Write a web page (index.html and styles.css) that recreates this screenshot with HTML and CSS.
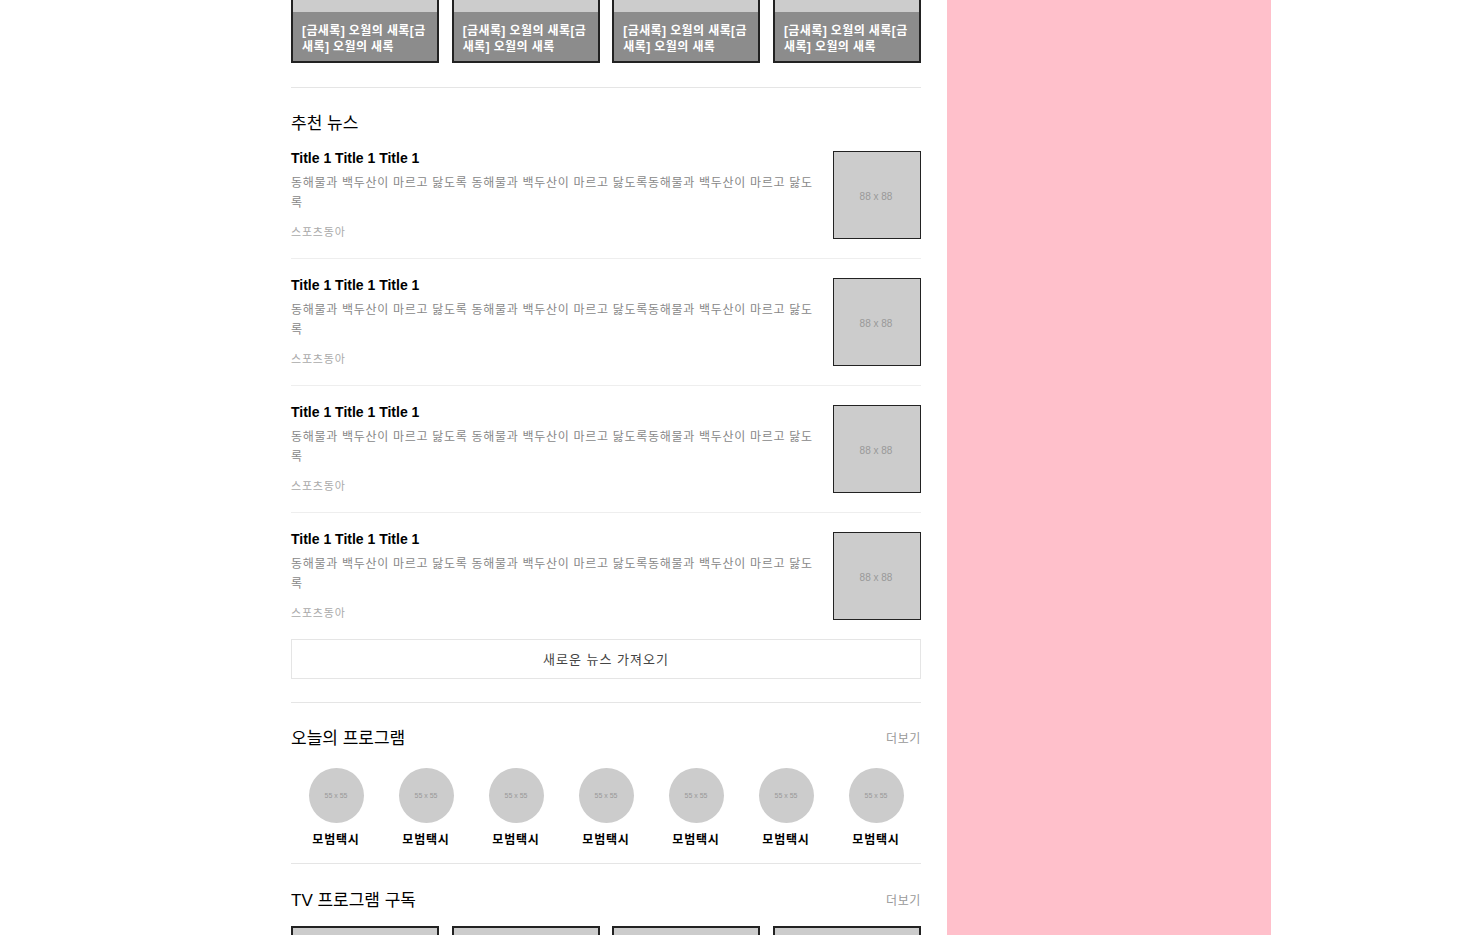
FILE: index.html
```html
<!DOCTYPE html>
<html lang="ko">
<head>
<meta charset="utf-8">
<title>뉴스</title>
<link rel="stylesheet" href="styles.css">
</head>
<body>
<div class="page">
  <main class="main">
    <section class="top-cards">
      <div class="card"><div class="card-img"></div><div class="card-cap">[금새록] 오월의 새록[금새록] 오월의 새록</div></div>
      <div class="card"><div class="card-img"></div><div class="card-cap">[금새록] 오월의 새록[금새록] 오월의 새록</div></div>
      <div class="card"><div class="card-img"></div><div class="card-cap">[금새록] 오월의 새록[금새록] 오월의 새록</div></div>
      <div class="card"><div class="card-img"></div><div class="card-cap">[금새록] 오월의 새록[금새록] 오월의 새록</div></div>
    </section>

    <section class="sec news">
      <h2 class="sec-title">추천 뉴스</h2>
      <ul class="news-list">
        <li class="news-item">
          <div class="news-text">
            <h3 class="news-title">Title 1 Title 1 Title 1</h3>
            <p class="news-desc">동해물과 백두산이 마르고 닳도록 동해물과 백두산이 마르고 닳도록동해물과 백두산이 마르고 닳도록</p>
            <span class="news-src">스포츠동아</span>
          </div>
          <div class="thumb">88 x 88</div>
        </li>
        <li class="news-item">
          <div class="news-text">
            <h3 class="news-title">Title 1 Title 1 Title 1</h3>
            <p class="news-desc">동해물과 백두산이 마르고 닳도록 동해물과 백두산이 마르고 닳도록동해물과 백두산이 마르고 닳도록</p>
            <span class="news-src">스포츠동아</span>
          </div>
          <div class="thumb">88 x 88</div>
        </li>
        <li class="news-item">
          <div class="news-text">
            <h3 class="news-title">Title 1 Title 1 Title 1</h3>
            <p class="news-desc">동해물과 백두산이 마르고 닳도록 동해물과 백두산이 마르고 닳도록동해물과 백두산이 마르고 닳도록</p>
            <span class="news-src">스포츠동아</span>
          </div>
          <div class="thumb">88 x 88</div>
        </li>
        <li class="news-item">
          <div class="news-text">
            <h3 class="news-title">Title 1 Title 1 Title 1</h3>
            <p class="news-desc">동해물과 백두산이 마르고 닳도록 동해물과 백두산이 마르고 닳도록동해물과 백두산이 마르고 닳도록</p>
            <span class="news-src">스포츠동아</span>
          </div>
          <div class="thumb">88 x 88</div>
        </li>
      </ul>
      <button class="more-btn" type="button">새로운 뉴스 가져오기</button>
    </section>

    <section class="sec programs">
      <div class="sec-head">
        <h2 class="sec-title">오늘의 프로그램</h2>
        <a class="more-link">더보기</a>
      </div>
      <ul class="prog-list">
        <li class="prog"><div class="circle">55 x 55</div><span class="prog-name">모범택시</span></li>
        <li class="prog"><div class="circle">55 x 55</div><span class="prog-name">모범택시</span></li>
        <li class="prog"><div class="circle">55 x 55</div><span class="prog-name">모범택시</span></li>
        <li class="prog"><div class="circle">55 x 55</div><span class="prog-name">모범택시</span></li>
        <li class="prog"><div class="circle">55 x 55</div><span class="prog-name">모범택시</span></li>
        <li class="prog"><div class="circle">55 x 55</div><span class="prog-name">모범택시</span></li>
        <li class="prog"><div class="circle">55 x 55</div><span class="prog-name">모범택시</span></li>
      </ul>
    </section>

    <section class="sec tv">
      <div class="sec-head">
        <h2 class="sec-title">TV 프로그램 구독</h2>
        <a class="more-link">더보기</a>
      </div>
      <div class="tv-cards">
        <div class="tv-card"></div>
        <div class="tv-card"></div>
        <div class="tv-card"></div>
        <div class="tv-card"></div>
      </div>
    </section>
  </main>
  <aside class="side"></aside>
</div>
</body>
</html>
```

FILE: styles.css
```css
html, body {
  margin: 0;
  padding: 0;
  height: 935px;
  overflow: hidden;
  background: #fff;
}

body {
  font-family: "Liberation Sans", "Noto Sans CJK KR", sans-serif;
  color: #000;
}

.page {
  display: flex;
  gap: 26px;
  padding-left: 291px;
  height: 935px;
}

.main {
  width: 630px;
  flex: none;
}

.side {
  width: 324px;
  flex: none;
  height: 935px;
  background: #ffc0cb;
}

/* top cards (scrolled, upper part off screen) */
.top-cards {
  display: grid;
  grid-template-columns: repeat(4, 148px);
  justify-content: space-between;
  margin-bottom: 24px;
}

.card {
  border: 2px solid #222;
  border-top: 0;
  background: #8c8c8c;
}

.card-img {
  height: 12px;
  background: #ccc;
}

.card-cap {
  padding: 11px 6px 6px 9px;
  font-size: 12px;
  line-height: 16px;
  font-weight: bold;
  letter-spacing: 0.4px;
  color: #fff;
}

/* sections */
.sec {
  border-top: 1px solid #e5e5e5;
  padding-top: 24px;
}

.sec-title {
  margin: 0;
  padding-top: 4px;
  font-size: 17px;
  line-height: 16px;
  font-weight: normal;
  color: #000;
}

.sec-head {
  display: flex;
  justify-content: space-between;
  align-items: center;
}

.more-link {
  font-size: 12px;
  letter-spacing: 0.6px;
  color: #999;
  cursor: pointer;
}

/* news */
.news {
  padding-bottom: 23px;
}

.news-list {
  list-style: none;
  margin: 0;
  padding: 0;
}

.news-item {
  display: flex;
  align-items: flex-start;
  padding: 19px 0;
  border-bottom: 1px solid #eee;
}

.news-item:last-child {
  border-bottom: 0;
}

.news-text {
  flex: 1;
  min-width: 0;
  margin-right: 19px;
}

.news-title {
  margin: 0;
  font-size: 14px;
  line-height: 14px;
  font-weight: bold;
  color: #000;
}

.news-desc {
  margin: 8px 0 0;
  font-size: 12px;
  line-height: 20px;
  letter-spacing: 0.7px;
  color: #888;
}

.news-src {
  display: block;
  margin-top: 12px;
  font-size: 11px;
  line-height: 14px;
  letter-spacing: 0.8px;
  color: #aaa;
}

.thumb {
  flex: none;
  width: 88px;
  height: 88px;
  box-sizing: border-box;
  border: 1px solid #222;
  background: #ccc;
  display: flex;
  align-items: center;
  justify-content: center;
  padding: 3px 2px 0 0;
  font-size: 10px;
  color: #999;
}

.more-btn {
  display: block;
  width: 100%;
  height: 40px;
  box-sizing: border-box;
  border: 1px solid #e5e5e5;
  background: #fff;
  font-family: inherit;
  font-size: 13px;
  letter-spacing: 1px;
  color: #444;
  padding: 0 0 2px;
}

/* programs */
.programs {
  padding-bottom: 15px;
}

.prog-list {
  list-style: none;
  margin: 21px 0 0;
  padding: 0;
  display: grid;
  grid-template-columns: repeat(7, 90px);
}

.prog {
  display: flex;
  flex-direction: column;
  align-items: center;
}

.circle {
  width: 55px;
  height: 55px;
  border-radius: 50%;
  background: #ccc;
  display: flex;
  align-items: center;
  justify-content: center;
  font-size: 7px;
  color: #999;
}

.prog-name {
  margin-top: 9px;
  font-size: 12px;
  line-height: 16px;
  font-weight: bold;
  letter-spacing: 0.8px;
  color: #000;
}

/* tv */
.tv {
  padding-top: 25px;
}

.tv-cards {
  margin-top: 17px;
  display: grid;
  grid-template-columns: repeat(4, 148px);
  justify-content: space-between;
}

.tv-card {
  height: 100px;
  border: 2px solid #222;
  background: #ccc;
}
```
